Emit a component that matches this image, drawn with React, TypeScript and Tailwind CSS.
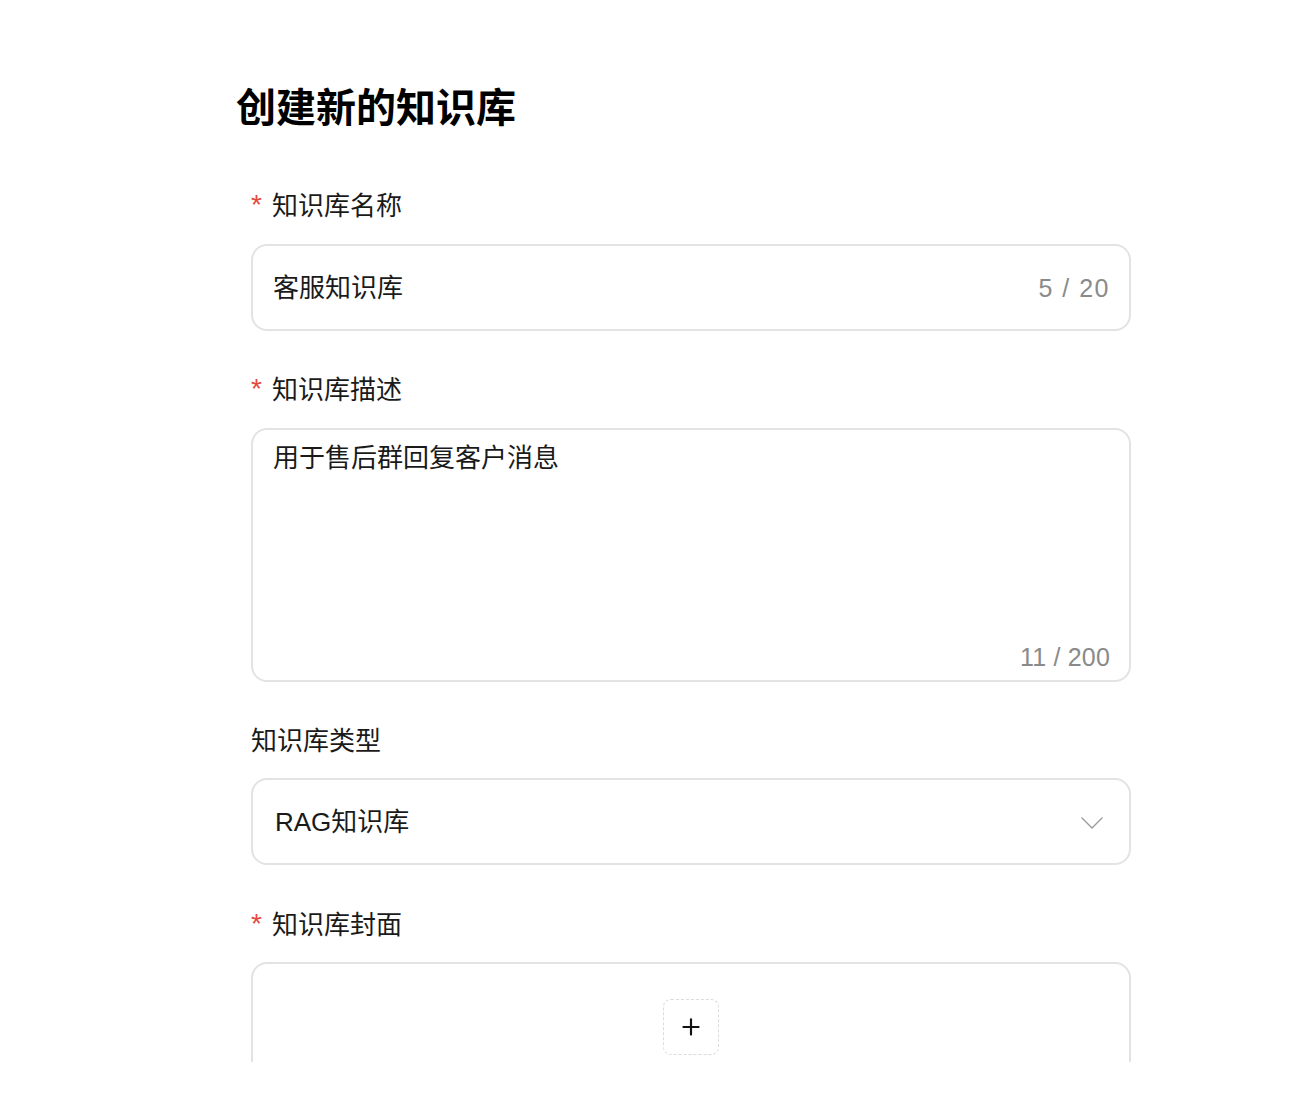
import { Plus } from "lucide-react";

const font = { fontFamily: '"Liberation Sans", "Noto Sans CJK SC", sans-serif' };

function Label({ text, required }: { text: string; required?: boolean }) {
    return (
        <div className="flex items-center h-9 pt-0.5 text-[26px] leading-9 text-[#1a1a1a]">
            {required && <span className="text-[#e5483c] text-[28px] w-[21px] -mt-0.5">*</span>}
            <span>{text}</span>
        </div>
    );
}

export default function App() {
    return (
        <div className="h-[1062px] overflow-hidden bg-white" style={font}>
            <div className="w-[895px] ml-[236px] pt-[79px]">
                <h1 className="text-[40px] leading-[56px] font-bold text-black pt-px">创建新的知识库</h1>

                <div className="ml-[15px] mt-[51px] flex flex-col">
                    <Label text="知识库名称" required />
                    <div className="mt-[21px] h-[87px] rounded-2xl border-2 border-[#e3e3e4] flex items-center justify-between pl-5 pr-[19px] pt-0.5">
                        <span className="text-[26px] text-[#1a1a1a]">客服知识库</span>
                        <span className="text-[25px] tracking-[1.5px] text-[#8a8a8a]">5 / 20</span>
                    </div>

                    <div className="mt-[40px]">
                        <Label text="知识库描述" required />
                    </div>
                    <div className="relative mt-[21px] h-[254px] rounded-2xl border-2 border-[#e3e3e4] pl-5 pr-[19px] pt-[10px]">
                        <div className="text-[26px] leading-9 text-[#1a1a1a]">用于售后群回复客户消息</div>
                        <div className="absolute right-[19px] bottom-[7px] text-[25px] tracking-[0.2px] leading-8 text-[#8a8a8a]">11 / 200</div>
                    </div>

                    <div className="mt-[40px]">
                        <Label text="知识库类型" />
                    </div>
                    <div className="mt-[20px] h-[87px] rounded-2xl border-2 border-[#e3e3e4] flex items-center justify-between pl-[22px] pr-[26px] pt-0.5">
                        <span className="text-[26px] text-[#1a1a1a]">RAG知识库</span>
                        <svg width="22" height="12" viewBox="0 0 22 12" fill="none" className="text-[#9a9a9a]">
                            <polyline points="1,1 11,11 21,1" stroke="currentColor" strokeWidth="1.4" strokeLinecap="round" strokeLinejoin="round" />
                        </svg>
                    </div>

                    <div className="mt-[41px]">
                        <Label text="知识库封面" required />
                    </div>
                    <div className="mt-[20px] h-[180px] rounded-2xl border-2 border-[#e3e3e4] flex justify-center pt-[35px]">
                        <div className="w-14 h-14 rounded-lg border-[1.5px] border-dashed border-[#dcdcdc] flex items-center justify-center">
                            <Plus size={26} strokeWidth={2} className="text-[#111]" />
                        </div>
                    </div>
                </div>
            </div>
        </div>
    );
}
